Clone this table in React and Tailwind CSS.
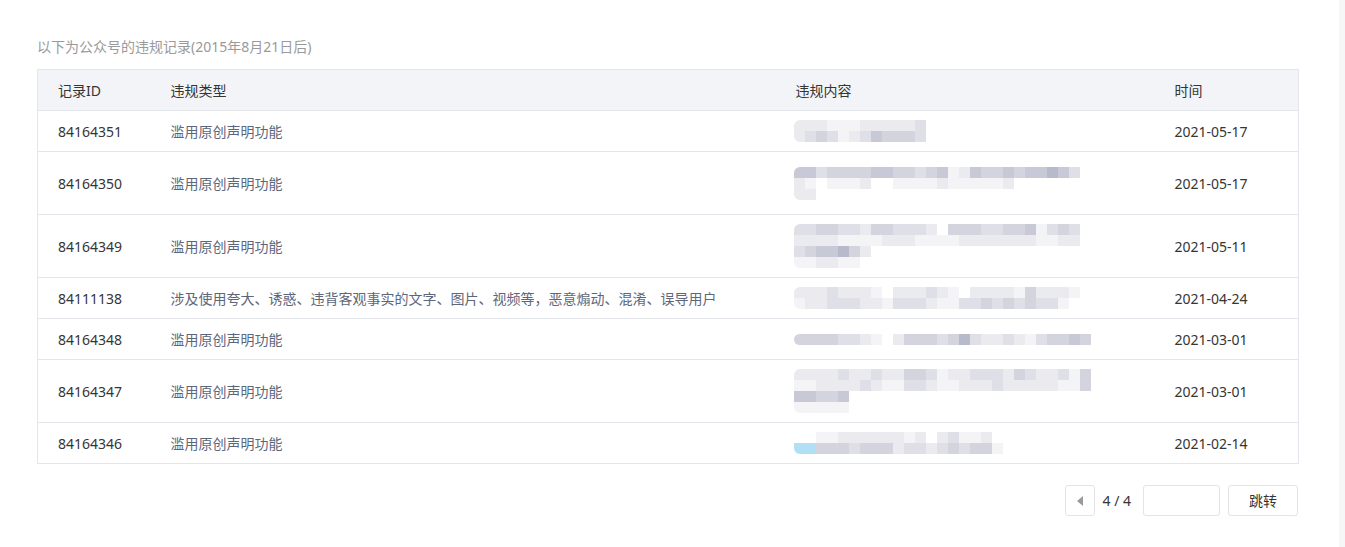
import React from 'react';

const font = { fontFamily: '"Noto Sans", "Noto Sans CJK SC", sans-serif' };

// tone palette for the mosaic-blurred content cells
const tones = {
    '.': null,
    a: '#f4f4f7',
    b: '#eaeaef',
    c: '#dfe0e7',
    d: '#d3d4de',
    e: '#c7c9d6',
    f: '#b7bacb',
    s: '#b1dff3',
};

const records = [
    { id: '84164351', type: '滥用原创声明功能', time: '2021-05-17', h: 'h-[41px]',
        blur: ['bbbaaabbbbbc', 'bcdcabcedddc'] },
    { id: '84164350', type: '滥用原创声明功能', time: '2021-05-17', h: 'h-[63px]',
        blur: ['eecddddeeddcdeabeddedeefec', 'ba.aaab..aaaabaaaaab.....', 'bb'] },
    { id: '84164349', type: '滥用原创声明功能', time: '2021-05-11', h: 'h-[63px]',
        blur: ['ccddccbddcccb.dddccddeacdc', 'bbbbaaaabbbaaaabbbbbbbaabb', 'cdeefdb', 'aabbaa'] },
    { id: '84111138', type: '涉及使用夸大、诱惑、违背客观事实的文字、图片、视频等，恶意煽动、混淆、误导用户', time: '2021-04-24', h: 'h-[41px]',
        blur: ['bbbcbbba.bbbcba.bbbbadbbba', 'abbcccbbacccbaaccdcdcdcca'] },
    { id: '84164348', type: '滥用原创声明功能', time: '2021-03-01', h: 'h-[41px]',
        blur: ['ddddccba.bdddcdfcbbcbacdded'] },
    { id: '84164347', type: '滥用原创声明功能', time: '2021-03-01', h: 'h-[63px]',
        blur: ['bbbbcbbcbbddcabbcccbdcbbcad', 'aabbbbcbaaccbaabbbcbbbbbaad', 'eedde', 'aaaaa'] },
    { id: '84164346', type: '滥用原创声明功能', time: '2021-02-14', h: 'h-[41px]',
        blur: ['..aabbbbbbab.bcaab..', 'ssdddcdddbccbcdcdda'] },
];

const Mosaic = ({ rows }) => {
    const cw = 11;
    const ch = 11;
    const width = Math.max(...rows.map(r => r.length)) * cw;
    return (
        <svg width={width} height={rows.length * ch} className="block">
            {rows.map((row, y) =>
                row.split('').map((t, x) =>
                    tones[t] ? (
                        <rect key={`${y}-${x}`} x={x * cw} y={y * ch} width={cw} height={ch} fill={tones[t]} />
                    ) : null
                )
            )}
        </svg>
    );
};

export default function App() {
    return (
        <div className="flex min-h-[547px] bg-white text-[14px] text-[#353535]" style={font}>
            <div className="flex-1 pl-[37px] pr-[40px] pt-[37px]">
                <p className="mb-[12px] leading-[20px] text-[#9a9a9a]">
                    以下为公众号的违规记录(2015年8月21日后)
                </p>

                <table className="w-[1261px] table-fixed border-collapse border border-[#e5e6eb]">
                    <colgroup>
                        <col className="w-[133px]" />
                        <col className="w-[625px]" />
                        <col className="w-[379px]" />
                        <col className="w-[124px]" />
                    </colgroup>
                    <thead>
                        <tr className="h-[41px] bg-[#f3f4f8]">
                            <th className="pl-[20px] text-left font-normal">记录ID</th>
                            <th className="text-left font-normal">违规类型</th>
                            <th className="text-left font-normal">违规内容</th>
                            <th className="text-left font-normal">时间</th>
                        </tr>
                    </thead>
                    <tbody>
                        {records.map(r => (
                            <tr key={r.id} className={`${r.h} border-t border-[#e5e6eb]`}>
                                <td className="pl-[20px] align-middle">{r.id}</td>
                                <td className="align-middle text-[#5d677b]">{r.type}</td>
                                <td className="align-middle">
                                    <div className="-ml-[2px] overflow-hidden rounded-l-[6px]">
                                        <Mosaic rows={r.blur} />
                                    </div>
                                </td>
                                <td className="align-middle">{r.time}</td>
                            </tr>
                        ))}
                    </tbody>
                </table>

                <div className="mt-[21px] flex w-[1261px] items-center justify-end">
                    <button className="flex h-[31px] w-[30px] items-center justify-center rounded-[3px] border border-[#e4e4e6] bg-white">
                        <span className="h-0 w-0 border-y-[5px] border-r-[6px] border-y-transparent border-r-[#9a9a9a]" />
                    </button>
                    <span className="ml-[7px] mr-[12px] text-[#353535]">4 / 4</span>
                    <input className="h-[31px] w-[77px] rounded-[3px] border border-[#e4e4e6] outline-none" />
                    <button className="ml-[8px] h-[31px] w-[70px] rounded-[3px] border border-[#e4e4e6] bg-white text-[#353535]">
                        跳转
                    </button>
                </div>
            </div>
            <div className="w-[7px] shrink-0 bg-[#f6f6f8]" />
        </div>
    );
}
